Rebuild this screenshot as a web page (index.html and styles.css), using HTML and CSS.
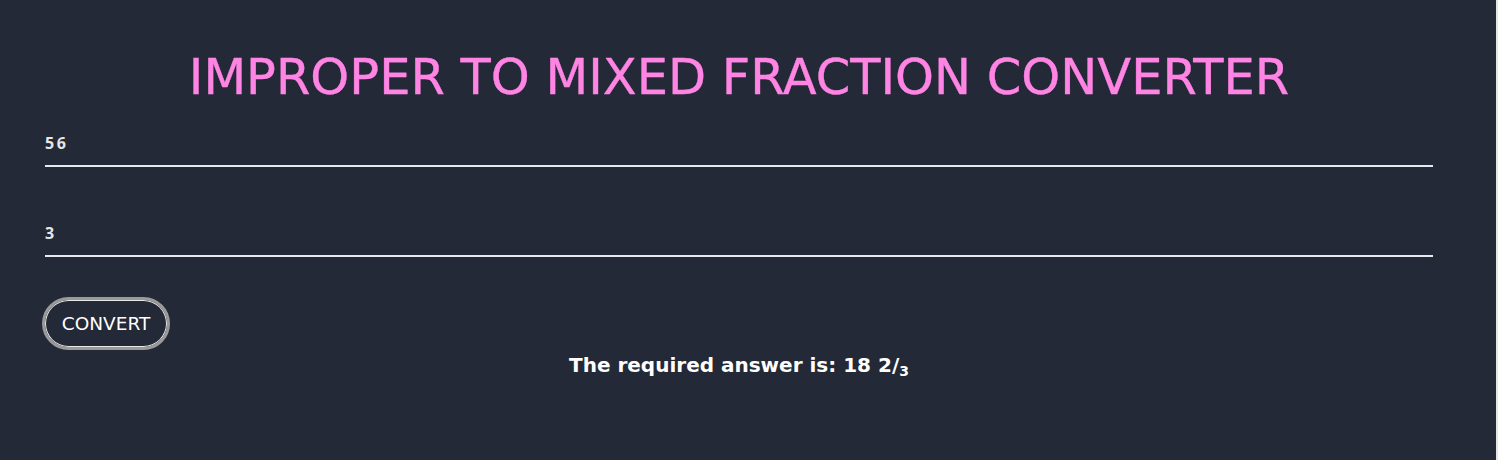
FILE: index.html
```html
<!DOCTYPE html>
<html lang="en">
<head>
<meta charset="utf-8">
<title>Improper to Mixed Fraction Converter</title>
<link rel="stylesheet" href="styles.css">
</head>
<body>
<div class="page">
  <main class="converter">
    <h1 class="title">IMPROPER TO MIXED FRACTION CONVERTER</h1>
    <div class="field"><input class="num-input" type="text" value="56"></div>
    <div class="field"><input class="num-input" type="text" value="3"></div>
    <div class="actions"><button class="convert-btn" type="button">CONVERT</button></div>
    <p class="answer">The required answer is: 18 2/<sub>3</sub></p>
  </main>
</div>
</body>
</html>
```

FILE: styles.css
```css
html, body {
  margin: 0;
  padding: 0;
  height: 100%;
  background: #e6e6e6;
}
.page {
  width: 1496px;
  height: 460px;
  background: #232936;
  box-sizing: border-box;
  padding: 0 63px 0 45px;
}
.converter {
  display: flex;
  flex-direction: column;
}
.title {
  margin: 0;
  padding-top: 52px;
  height: 50px;
  text-align: center;
  font-family: "DejaVu Sans", sans-serif;
  font-weight: normal;
  font-size: 49.5px;
  line-height: 50px;
  color: #ff84e4;
  -webkit-text-stroke: 0.4px #ff84e4;
}
.field {
  margin-top: 31px;
}
.field + .field {
  margin-top: 56px;
}
.num-input {
  display: block;
  width: 100%;
  box-sizing: border-box;
  background: transparent;
  border: none;
  border-bottom: 2px solid #e8e8f0;
  outline: none;
  padding: 0 0 13px 0;
  height: 34px;
  font-family: "Open Sans", sans-serif;
  font-weight: 700;
  font-size: 16px;
  letter-spacing: 2.5px;
  color: #e6e6e6;
}
.actions {
  margin-top: 40px;
  display: flex;
}
.convert-btn {
  margin-left: -3px;
  width: 128px;
  height: 53px;
  border-radius: 27px;
  border: 3px solid #9a9a9a;
  box-shadow: inset 0 0 0 1px #e8e8e8;
  background: #232936;
  color: #ffffff;
  font-family: "DejaVu Sans", sans-serif;
  font-size: 18.5px;
  letter-spacing: 0;
  padding: 0;
  cursor: pointer;
}
.answer {
  margin: 0;
  margin-top: 0;
  text-align: center;
  font-family: "DejaVu Sans", sans-serif;
  font-weight: bold;
  font-size: 20px;
  line-height: 30px;
  color: #ffffff;
}
.answer sub {
  font-size: 14px;
  vertical-align: -4px;
  line-height: 0;
}
```
